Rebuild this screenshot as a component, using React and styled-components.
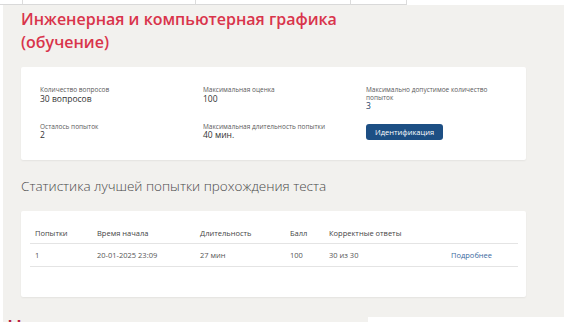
import styled, { createGlobalStyle } from 'styled-components';

const GlobalStyle = createGlobalStyle`
  html, body {
    margin: 0;
    padding: 0;
    background: #ffffff;
  }
  body {
    font-family: "Open Sans", "Noto Sans", sans-serif;
  }
`;

const stats = [
  { label: 'Количество вопросов', value: '30 вопросов' },
  { label: 'Максимальная оценка', value: '100' },
  { label: 'Максимально допустимое количество попыток', value: '3', accent: true },
  { label: 'Осталось попыток', value: '2' },
  { label: 'Максимальная длительность попытки', value: '40 мин.' },
];

const columns = ['Попытки', 'Время начала', 'Длительность', 'Балл', 'Корректные ответы', ''];

export default function App() {
  return (
    <>
      <GlobalStyle />
      <Screen>
        <TopStrip>
          <StripCell w={22} />
          <StripCell w={173} bordered />
          <StripCell w={155} bordered />
          <StripCell w={57} bordered last />
        </TopStrip>
        <Page>
          <Title>
            Инженерная и компьютерная графика
            <br />
            (обучение)
          </Title>

          <InfoCard>
            {stats.map((s) => (
              <Stat key={s.label}>
                <StatLabel>{s.label}</StatLabel>
                <StatValue accent={s.accent}>{s.value}</StatValue>
              </Stat>
            ))}
            <Stat>
              <Button>Идентификация</Button>
            </Stat>
          </InfoCard>

          <Heading>Статистика лучшей попытки прохождения теста</Heading>

          <TableCard>
            <Table>
              <colgroup>
                <col style={{ width: 62 }} />
                <col style={{ width: 103 }} />
                <col style={{ width: 90 }} />
                <col style={{ width: 39 }} />
                <col style={{ width: 122 }} />
                <col />
              </colgroup>
              <thead>
                <tr>
                  {columns.map((c, i) => (
                    <Th key={i}>{c}</Th>
                  ))}
                </tr>
              </thead>
              <tbody>
                <tr>
                  <Td>1</Td>
                  <Td>20-01-2025 23:09</Td>
                  <Td>27 мин</Td>
                  <Td>100</Td>
                  <Td>30 из 30</Td>
                  <Td>
                    <MoreLink href="#">Подробнее</MoreLink>
                  </Td>
                </tr>
              </tbody>
            </Table>
          </TableCard>

          <Footer>
            <NextTitle>Н</NextTitle>
            <SideBox />
          </Footer>
        </Page>
      </Screen>
    </>
  );
}

const Screen = styled.div`
  width: 567px;
  height: 322px;
  overflow: hidden;
  background: #ffffff;
`;

const TopStrip = styled.div`
  display: flex;
  height: 5px;
`;

const StripCell = styled.div`
  width: ${({ w }) => w}px;
  box-sizing: border-box;
  border-bottom: 1px solid #d9d9d9;
  border-left: ${({ bordered }) => (bordered ? '1px solid #dcdcdc' : 'none')};
  border-right: ${({ last }) => (last ? '1px solid #dcdcdc' : 'none')};
`;

const Page = styled.div`
  margin: 0 3px 0 3px;
  background: #f2f1ee;
  padding: 3px 38px 0 18px;
  height: 317px;
  box-sizing: border-box;
  position: relative;
`;

const Title = styled.h1`
  margin: 0;
  font-family: "Open Sans", "Noto Sans", sans-serif;
  font-weight: 600;
  font-size: 16px;
  line-height: 23px;
  color: #d9344b;
`;

const InfoCard = styled.div`
  margin-top: 13px;
  background: #ffffff;
  border-radius: 2px;
  box-shadow: 0 1px 2px rgba(0, 0, 0, 0.06);
  padding: 19px 19px 19px 19px;
  display: grid;
  grid-template-columns: 163px 163px 1fr;
  row-gap: 11px;
  height: 93px;
  box-sizing: border-box;
`;

const Stat = styled.div`
  display: flex;
  flex-direction: column;
  max-width: 128px;
`;

const StatLabel = styled.div`
  font-size: 6.5px;
  line-height: 7.5px;
  color: #5a5a5a;
`;

const StatValue = styled.div`
  font-size: 8.5px;
  line-height: 10px;
  color: ${({ accent }) => (accent ? '#1f3f66' : '#333333')};
`;

const Button = styled.button`
  align-self: flex-start;
  margin-top: 1px;
  height: 16px;
  padding: 0 9px;
  border: none;
  border-radius: 3px;
  background: #1d4f84;
  color: #ffffff;
  font-family: "Open Sans", "Noto Sans", sans-serif;
  font-size: 7.5px;
  line-height: 16px;
  cursor: pointer;
`;

const Heading = styled.h2`
  margin: 17px 0 0;
  font-family: "Open Sans", "Noto Sans", sans-serif;
  font-weight: 300;
  font-size: 13.5px;
  line-height: 18px;
  color: #4a4a4a;
`;

const TableCard = styled.div`
  margin-top: 16px;
  background: #ffffff;
  border-radius: 2px;
  box-shadow: 0 1px 2px rgba(0, 0, 0, 0.06);
  padding: 12px 8px 30px 9px;
`;

const Table = styled.table`
  width: 100%;
  border-collapse: collapse;
  table-layout: fixed;
`;

const Th = styled.th`
  text-align: left;
  font-weight: 400;
  font-size: 7.5px;
  line-height: 9px;
  color: #444444;
  padding: 6px 5px 5px;
  border-bottom: 1px solid #e4e4e4;
`;

const Td = styled.td`
  font-size: 7.5px;
  line-height: 9px;
  color: #555555;
  padding: 7px 5px 6px;
  border-bottom: 1px solid #e4e4e4;
`;

const MoreLink = styled.a`
  color: #3a6aa0;
  text-decoration: none;
`;

const Footer = styled.div`
  display: flex;
  justify-content: space-between;
  align-items: flex-start;
  margin: 20px -38px 0 -16px;
  height: 10px;
`;

const NextTitle = styled.div`
  font-family: "Open Sans", "Noto Sans", sans-serif;
  font-weight: 600;
  font-size: 20px;
  line-height: 20px;
  color: #b8233e;
  padding-left: 2px;
`;

const SideBox = styled.div`
  width: 196px;
  height: 10px;
  background: #ffffff;
`;
